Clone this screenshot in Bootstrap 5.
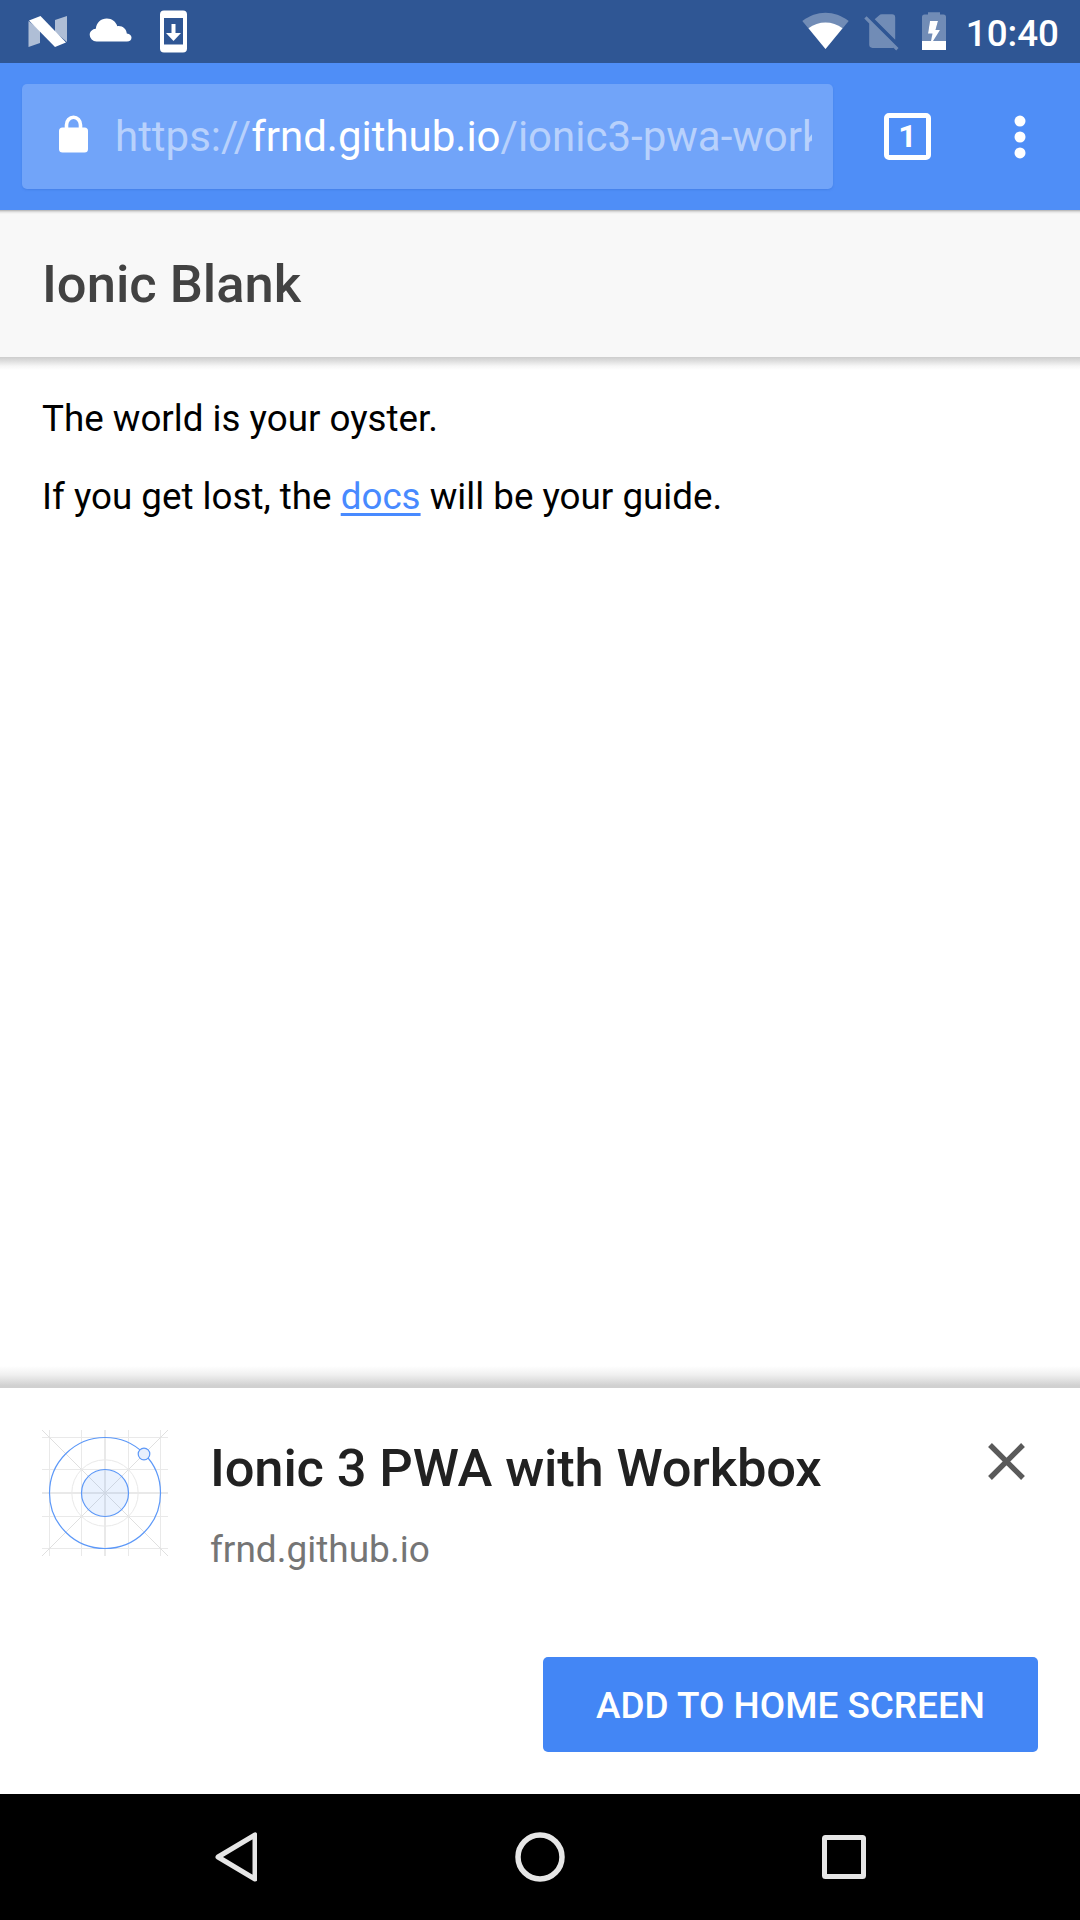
<!DOCTYPE html>
<html lang="en">
<head>
<meta charset="utf-8">
<meta name="viewport" content="width=device-width, initial-scale=1">
<title>Ionic Blank</title>
<link href="https://cdn.jsdelivr.net/npm/bootstrap@5.3.0/dist/css/bootstrap.min.css" rel="stylesheet">
<style>
  body { font-family: Roboto, sans-serif; background: #fff; color: #000; }
  svg { display: block; flex: none; }
  .screen { width: 1080px; height: 1920px; overflow: hidden; }
  .status-strip { height: 63px; background: #2f5694; padding: 0 21px 0 28px; }
  .icon-cloud { margin-left: 22px; }
  .icon-download { margin-left: 28px; }
  .icon-sim { margin-left: 15px; }
  .icon-battery { margin-left: 23px; }
  .clock { font-size: 36.75px; line-height: 63px; font-weight: 500; padding-top: 3px; margin-left: 19.5px; }
  .browser-bar { height: 147px; background: #4f8ef7; padding: 21px 0 0 21.5px; }
  .url-field { width: 811.5px; height: 105px; border-radius: 5px; background: #71a4f9; box-shadow: 0 1px 2px rgba(40,90,190,.25); padding: 0 21px 0 37.5px; }
  .icon-lock { margin-bottom: 5px; }
  .url-text { font-size: 42px; line-height: 105px; margin-left: 27px; color: #b8d1fc; }
  .url-text b { font-weight: 400; color: #fff; }
  .bar-tools { height: 105px; }
  .tab-count { width: 47px; height: 47px; border: 5px solid #fff; border-radius: 5px; font-size: 32px; font-weight: 700; line-height: 1; margin-left: 51px; padding-bottom: 1px; }
  .icon-dots { margin-left: 82.5px; }
  .app-header { height: 147px; background: linear-gradient(#b0b0b0, #e4e4e4 2px, #f8f8f8 4px); padding: 1px 42px 0; }
  .app-title { font-size: 52.5px; font-weight: 500; line-height: 1; color: #424242; }
  .app-main { padding: 38px 42px; font-size: 36.75px; line-height: 48px; background: linear-gradient(#cdcdcd, #dedede 4px, #f6f6f6 9px, #fff 13px); }
  .app-main p { margin-bottom: 30px; }
  .app-main a { color: #488aff; text-underline-offset: 4px; text-decoration-thickness: 3px; }
  .shade { height: 22px; background: linear-gradient(#fff, #f0f0f0 40%, #d0d0d0 90%); }
  .install-banner { height: 406px; background: #fff; padding: 42px; }
  .banner-copy { margin-left: 42px; }
  .banner-title { font-size: 52.5px; font-weight: 500; line-height: 60px; color: #212121; margin-top: 8px; letter-spacing: -.16px; }
  .banner-host { font-size: 37px; line-height: 44px; color: #757575; margin-top: 30px; }
  .add-btn { width: 495px; height: 95px; border-radius: 5px; background: #4386f5; color: #fff; font-size: 36.9px; font-weight: 500; border: 0; padding: 3px 0 0; }
  .nav-strip { height: 126px; background: #000; padding-left: 213.5px; }
  .icon-home { margin-left: 258.5px; }
  .icon-recent { margin-left: 257px; }
</style>
<script src="https://cdn.jsdelivr.net/npm/bootstrap@5.3.0/dist/js/bootstrap.bundle.min.js"></script>
</head>
<body>
<div class="screen d-flex flex-column">
  <div class="status-strip d-flex align-items-center text-white">
    <svg width="39" height="63" viewBox="28 0 39 63"><path fill="#fff" fill-opacity=".62" d="M28.500 21L40 30V43L28.500 47ZM67 16V42L55 32V20Z"/><path fill="#fff" d="M29 20.500L40.500 16L66 42.500L55 47Z"/></svg>
    <svg class="icon-cloud" width="43" height="63" viewBox="89 0 43 63"><path fill="#fff" d="M96.500 41.600A6.800 6.800 0 0 1 89.700 34.800C89.700 31.500 92.500 29 95.800 28.700C96.500 22.500 101 18.500 106.800 18.500C112 18.500 116 21.800 117.300 26.200C122.500 25.500 126.500 29 126.800 33.600C130 34 131.500 35.800 131.500 37.600C131.500 40 129.800 41.600 127 41.600Z"/></svg>
    <svg class="icon-download" width="27" height="63" viewBox="160 0 27 63"><path fill="#fff" fill-rule="evenodd" d="M164 10.500H183A4 4 0 0 1 187 14.500V48.500A4 4 0 0 1 183 52.500H164A4 4 0 0 1 160 48.500V14.500A4 4 0 0 1 164 10.500ZM164 18V44.500H183V18Z"/><path fill="#fff" d="M171.500 24H175.500V33H181L173.500 41L166 33H171.500Z"/></svg>
    <div class="d-flex align-items-center ms-auto">
      <svg width="47" height="63" viewBox="801.500 0 47 63"><path fill="#fff" fill-opacity=".32" d="M825 49L801.800 21C809 15.500 817 12.700 825 12.700S841 15.500 848.200 21Z"/><path fill="#fff" d="M825 49L808 28.300C813 24.500 819 22.500 825 22.500S837 24.500 842 28.300Z"/></svg>
      <svg class="icon-sim" width="35" height="63" viewBox="864 0 35 63"><g fill="#fff" fill-opacity=".32"><path d="M864.300 18.500L866.600 16.200L898.500 48.100L896.200 50.400L893.500 47.700Q893 47.900 892 47.900H872.500A3.300 3.300 0 0 1 869.200 44.600V23.400Z"/><path d="M882 14.200H892A3.200 3.200 0 0 1 895.200 17.400V39.800L874.700 19.300L879 15.500Q880 14.200 882 14.200Z"/></g></svg>
      <svg class="icon-battery" width="24" height="63" viewBox="922 0 24 63"><path fill="#fff" fill-opacity=".32" fill-rule="evenodd" d="M928 14.500V12.200H940V14.500H943.500Q946 14.500 946 17V41H922V17Q922 14.500 924.500 14.500ZM930 21L928 33H933L931.500 41L940 30H935.500L938 21Z"/><path fill="#fff" d="M922 41H931L932.500 33.500H928L930 21H938L935.500 30H940L933 41H946V50H922Z"/></svg>
      <span class="clock">10:40</span>
    </div>
  </div>

  <div class="browser-bar d-flex">
    <div class="url-field d-flex align-items-center">
      <svg class="icon-lock" width="29" height="38" viewBox="0 0 29 38"><rect y="12.500" width="29" height="25" rx="3.500" fill="#fff"/><path d="M7.500 14V10A7 7.700 0 0 1 21.500 10V14" fill="none" stroke="#fff" stroke-width="3.600"/></svg>
      <div class="url-text flex-fill overflow-hidden text-nowrap">https://<b>frnd.github.io</b>/ionic3-pwa-work</div>
    </div>
    <div class="bar-tools d-flex align-items-center text-white">
      <div class="tab-count d-flex align-items-center justify-content-center">1</div>
      <svg class="icon-dots" width="12" height="46" viewBox="0 0 12 46"><g fill="#fff"><circle cx="6" cy="7.100" r="5.500"/><circle cx="6" cy="23" r="5.500"/><circle cx="6" cy="38.900" r="5.500"/></g></svg>
    </div>
  </div>

  <header class="app-header d-flex align-items-center"><h1 class="app-title m-0">Ionic Blank</h1></header>
  <main class="app-main flex-fill">
    <p>The world is your oyster.</p>
    <p>If you get lost, the <a href="#">docs</a> will be your guide.</p>
  </main>

  <div class="shade"></div>
  <section class="install-banner d-flex flex-column">
    <div class="d-flex align-items-start">
      <svg width="126" height="126" viewBox="0 0 126 126" fill="none">
        <g stroke="#e9e9e9"><path d="M7.500 0V126M39.500 0V126M86.500 0V126M118.500 0V126M0 7.500H126M0 39.500H126M0 86.500H126M0 118.500H126"/><path d="M63 0V126M0 63H126" stroke-width="2"/><path d="M0 0L126 126M126 0L0 126" stroke="#e0e0e0"/><circle cx="63" cy="63" r="33.200"/></g>
        <circle cx="63" cy="63" r="23.500" fill="#4386f5" fill-opacity=".11" stroke="#5c98f8" stroke-width="1.200"/>
        <circle cx="63" cy="63" r="55.500" stroke="#5c98f8" stroke-width="1.200"/>
        <circle cx="102" cy="24" r="5.800" fill="#e8effd" stroke="#5c98f8" stroke-width="1.200"/>
      </svg>
      <div class="banner-copy">
        <h2 class="banner-title mb-0">Ionic 3 PWA with Workbox</h2>
        <div class="banner-host">frnd.github.io</div>
      </div>
      <svg class="ms-auto" width="50" height="60" viewBox="988 1430 50 60"><path d="M990 1445L1023 1478M1023 1445L990 1478" stroke="#5a5a5a" stroke-width="5.400"/></svg>
    </div>
    <button class="btn add-btn mt-auto ms-auto">ADD TO HOME SCREEN</button>
  </section>
  <nav class="nav-strip d-flex align-items-center" aria-label="System">
    <svg width="43" height="52" viewBox="0 0 43 52"><path d="M41 4V48L4 26Z" fill="none" stroke="#e6e6e6" stroke-width="5" stroke-linejoin="round"/></svg>
    <svg class="icon-home" width="50" height="50" viewBox="0 0 50 50"><circle cx="25" cy="25" r="22" fill="none" stroke="#e6e6e6" stroke-width="5.500"/></svg>
    <svg class="icon-recent" width="44" height="44" viewBox="0 0 44 44"><rect x="2.500" y="2.500" width="39" height="39" rx="1" fill="none" stroke="#e6e6e6" stroke-width="5"/></svg>
  </nav>
</div>
</body>
</html>
